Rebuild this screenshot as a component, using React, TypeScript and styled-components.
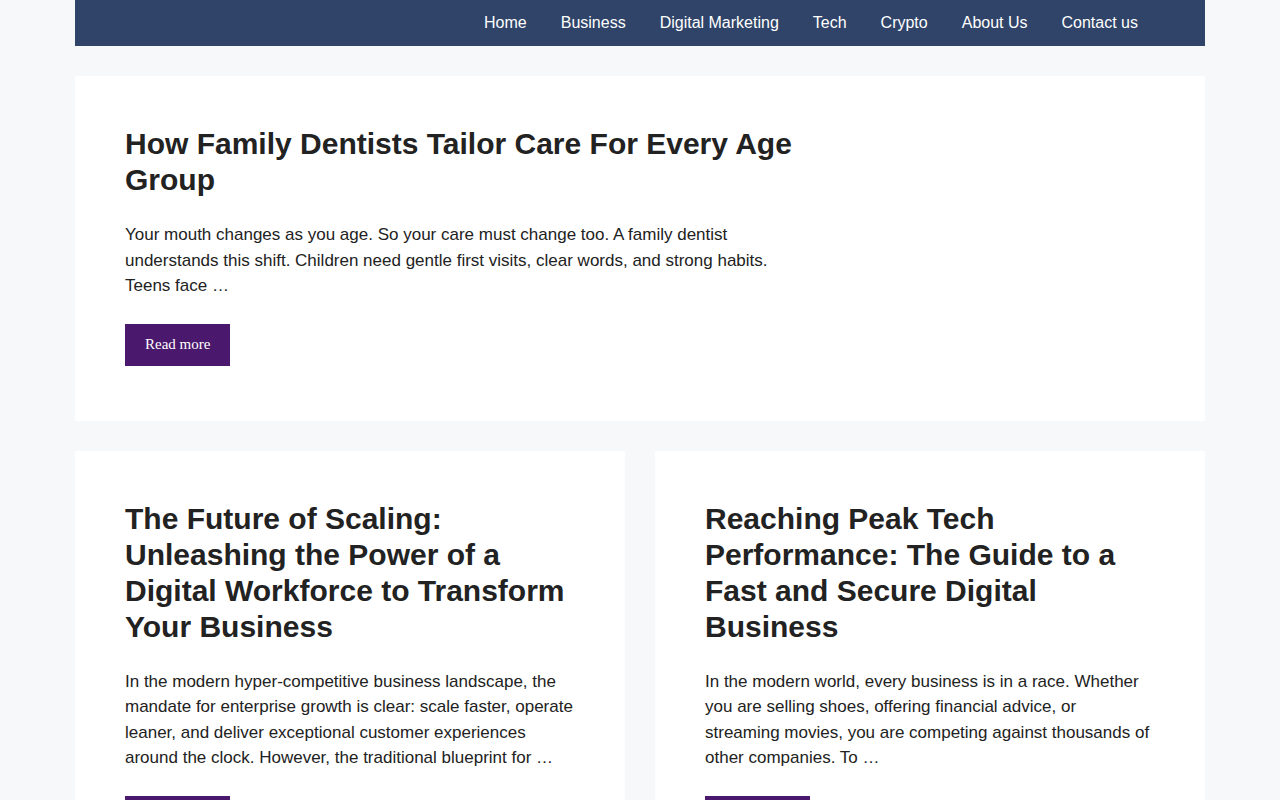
import styled, { createGlobalStyle } from 'styled-components'

const GlobalStyle = createGlobalStyle`
  body {
    margin: 0;
    background: #f7f8f9;
    font-family: 'Liberation Sans', Arial, sans-serif;
    color: #222222;
  }
`

const navItems = ['Home', 'Business', 'Digital Marketing', 'Tech', 'Crypto', 'About Us', 'Contact us']

const posts = [
  {
    title: 'How Family Dentists Tailor Care For Every Age Group',
    excerpt:
      'Your mouth changes as you age. So your care must change too. A family dentist understands this shift. Children need gentle first visits, clear words, and strong habits. Teens face …',
  },
  {
    title: 'The Future of Scaling: Unleashing the Power of a Digital Workforce to Transform Your Business',
    excerpt:
      'In the modern hyper-competitive business landscape, the mandate for enterprise growth is clear: scale faster, operate leaner, and deliver exceptional customer experiences around the clock. However, the traditional blueprint for …',
  },
  {
    title: 'Reaching Peak Tech Performance: The Guide to a Fast and Secure Digital Business',
    excerpt:
      'In the modern world, every business is in a race. Whether you are selling shoes, offering financial advice, or streaming movies, you are competing against thousands of other companies. To …',
  },
]

const App = () => {
  const [featured, ...rest] = posts
  return (
    <>
      <GlobalStyle />
      <Page>
        <NavBar>
          <NavList>
            {navItems.map((item) => (
              <NavLink key={item}>{item}</NavLink>
            ))}
          </NavList>
        </NavBar>
        <Grid>
          <Card $wide>
            <CardInner $wide>
              <Title>{featured.title}</Title>
              <Excerpt>{featured.excerpt}</Excerpt>
              <ReadMore>Read more</ReadMore>
            </CardInner>
          </Card>
          {rest.map((post) => (
            <Card key={post.title}>
              <CardInner>
                <Title>{post.title}</Title>
                <Excerpt>{post.excerpt}</Excerpt>
                <ReadMore>Read more</ReadMore>
              </CardInner>
            </Card>
          ))}
        </Grid>
      </Page>
    </>
  )
}

export default App

const Page = styled.div`
  width: 1130px;
  margin: 0 auto;
`

const NavBar = styled.nav`
  height: 46px;
  background: #2f4468;
  display: flex;
  justify-content: flex-end;
  padding-right: 50px;
`

const NavList = styled.div`
  display: flex;
  align-items: center;
`

const NavLink = styled.a`
  color: #ffffff;
  font-size: 16px;
  padding: 0 17px;
  line-height: 46px;
  cursor: pointer;
`

const Grid = styled.div`
  display: grid;
  grid-template-columns: 1fr 1fr;
  gap: 30px;
  margin-top: 30px;
`

const Card = styled.article<{ $wide?: boolean }>`
  background: #ffffff;
  grid-column: ${(p) => (p.$wide ? '1 / -1' : 'auto')};
  padding: 50px 50px 55px;
`

const CardInner = styled.div<{ $wide?: boolean }>`
  max-width: ${(p) => (p.$wide ? '680px' : 'none')};
`

const Title = styled.h2`
  margin: 0 0 24px;
  font-size: 30px;
  font-weight: 700;
  line-height: 36px;
  color: #222222;
`

const Excerpt = styled.p`
  margin: 0 0 23px;
  font-size: 17px;
  line-height: 25.5px;
  color: #222222;
`

const ReadMore = styled.button`
  display: inline-block;
  margin-top: 2px;
  border: 0;
  background: #4a186c;
  color: #ffffff;
  font-family: 'Liberation Serif', 'Times New Roman', serif;
  font-size: 15px;
  height: 42px;
  padding: 0 20px;
  cursor: pointer;
`
